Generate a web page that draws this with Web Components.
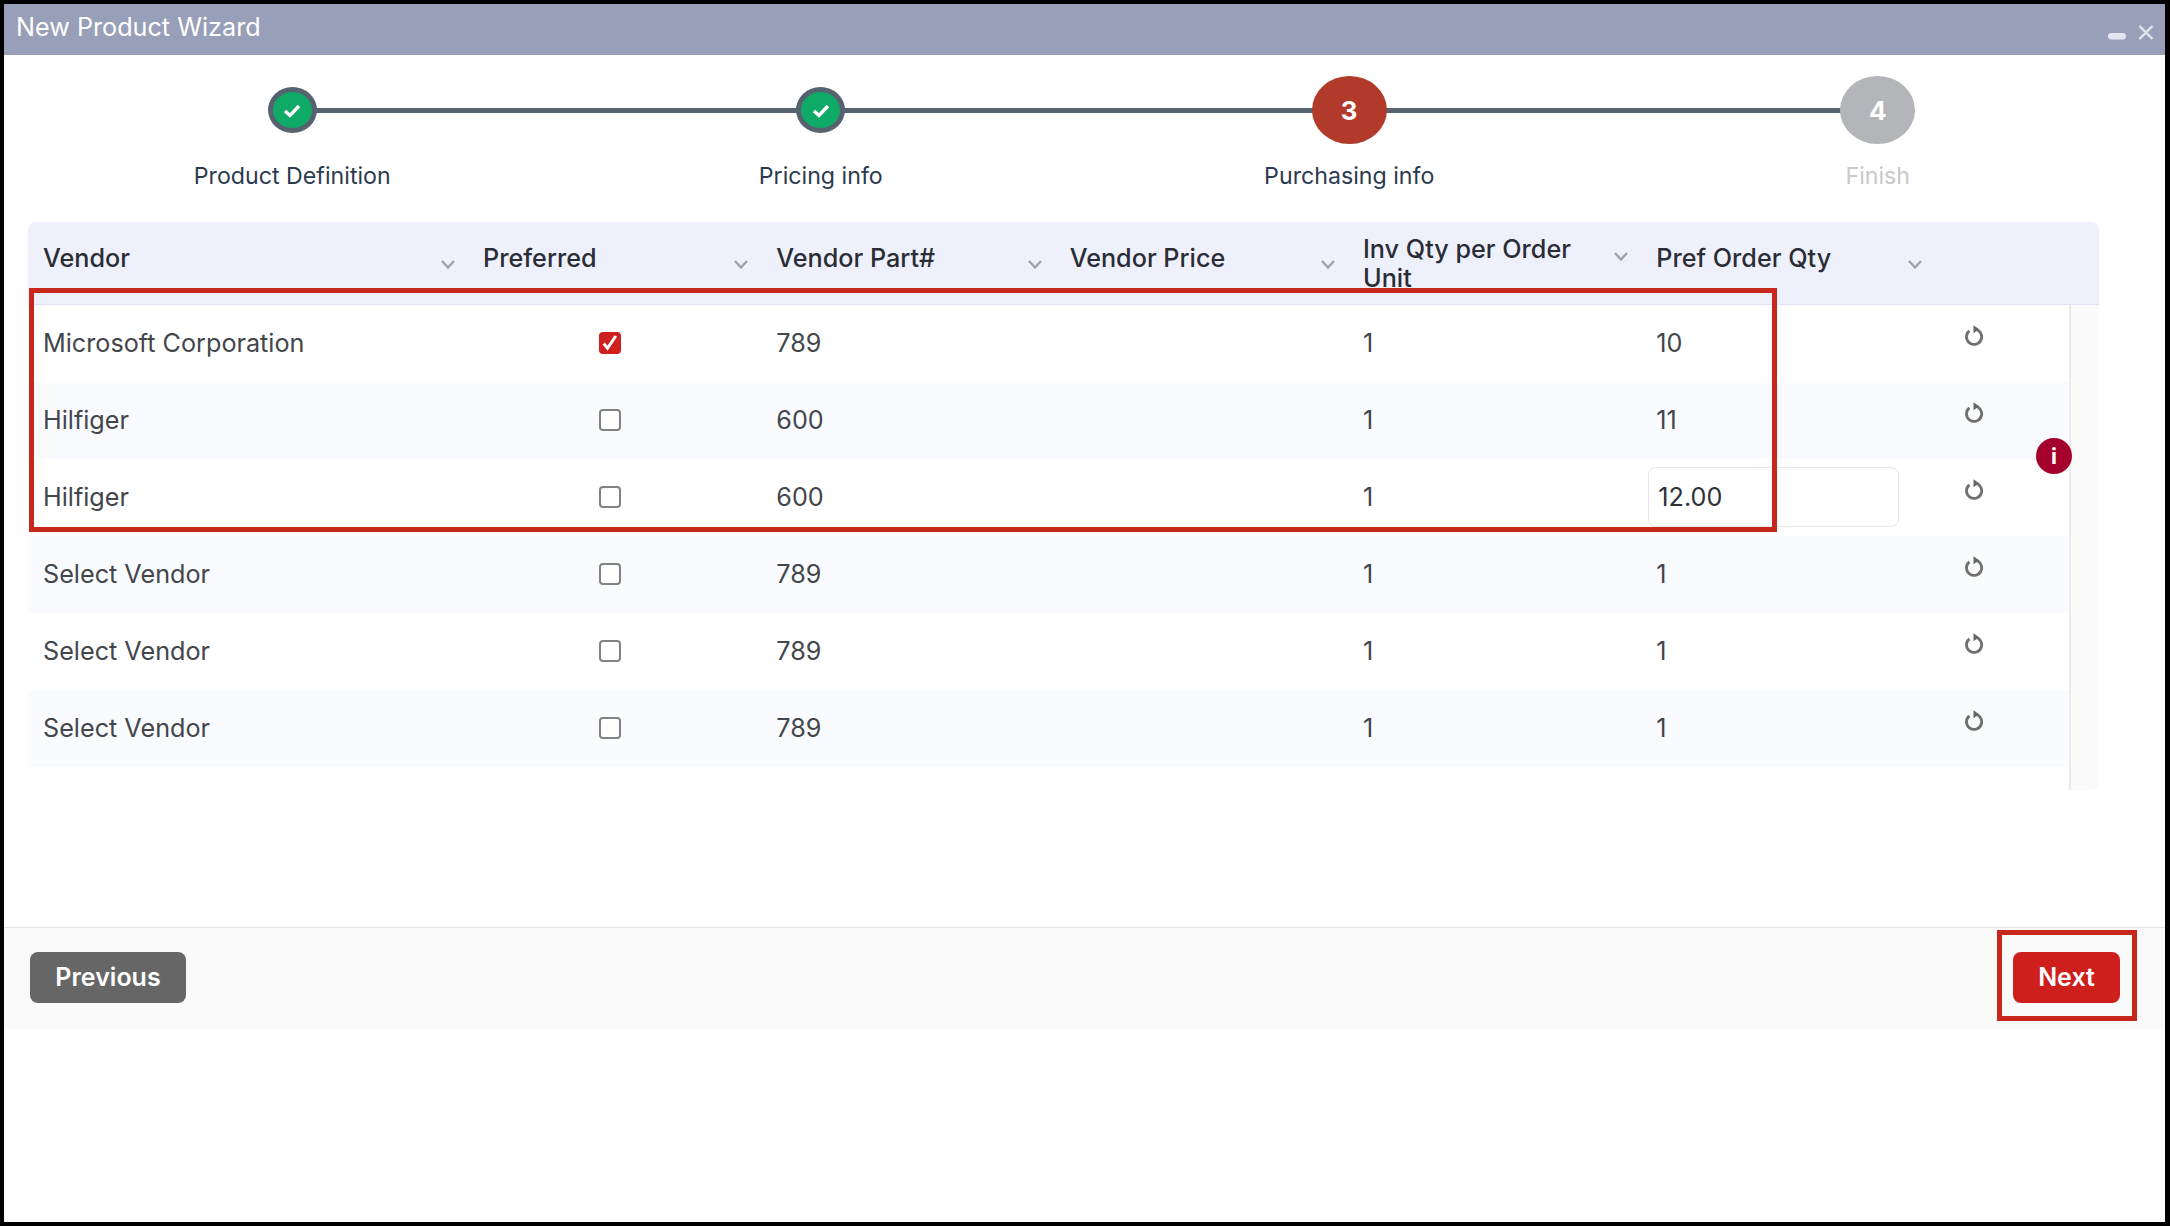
<!DOCTYPE html>
<html>
<head>
<meta charset="utf-8">
<title>New Product Wizard</title>
<style>
    html, body { margin: 0; padding: 0; background: #000; }
    body { padding: 4px 5px 4px 4px; font-family: Inter, "Liberation Sans", sans-serif; }
</style>
</head>
<body>
<wizard-window heading="New Product Wizard">
    <wizard-steps>
        <wizard-step state="done" label="Product Definition"></wizard-step>
        <wizard-step state="done" label="Pricing info"></wizard-step>
        <wizard-step state="active" number="3" label="Purchasing info"></wizard-step>
        <wizard-step state="todo" number="4" label="Finish"></wizard-step>
    </wizard-steps>
    <vendor-table>
        <vendor-row vendor="Microsoft Corporation" part="789" qty="1" pref="10" checked></vendor-row>
        <vendor-row tint vendor="Hilfiger" part="600" qty="1" pref="11"></vendor-row>
        <vendor-row vendor="Hilfiger" part="600" qty="1" pref="12.00" editing></vendor-row>
        <vendor-row tint vendor="Select Vendor" part="789" qty="1" pref="1"></vendor-row>
        <vendor-row vendor="Select Vendor" part="789" qty="1" pref="1"></vendor-row>
        <vendor-row tint vendor="Select Vendor" part="789" qty="1" pref="1"></vendor-row>
    </vendor-table>
    <wizard-footer>
        <wizard-button kind="back">Previous</wizard-button>
        <wizard-button kind="next">Next</wizard-button>
    </wizard-footer>
    <info-badge style="left:2032px;top:434px"></info-badge>
    <mark-box style="left:24.5px;top:284px;width:1748.5px;height:243.5px"></mark-box>
    <mark-box style="left:1993px;top:926px;width:140px;height:91px"></mark-box>
</wizard-window>

<script>
try {
    (function() {
        const define = (name, html, Base) => {
            const tpl = document.createElement('template');
            tpl.innerHTML = html;
            window.customElements.define(name, class extends (Base || HTMLElement) {
                constructor() {
                    super();
                    this.attachShadow({mode: 'open'});
                    this.shadowRoot.appendChild(tpl.content.cloneNode(true));
                }
                connectedCallback() {
                    if (this.render) this.render();
                }
            });
        };

        define('wizard-window', `
            <style>
                :host { display: block; position: relative; width: 2161px; height: 1218px; background: #fff; overflow: hidden; }
                header {
                    display: flex; align-items: center; justify-content: space-between;
                    height: 51px; padding: 0 11px 5px 12px; box-sizing: border-box;
                    background: #989fb8; color: #fff; font-size: 25.2px;
                }
                .ctl { display: flex; align-items: flex-end; gap: 12px; margin-top: 10px; }
                svg { display: block; }
            </style>
            <header>
                <span id="title"></span>
                <span class="ctl">
                    <svg width="18" height="7" viewBox="0 0 18 7"><rect width="18" height="6.5" rx="3.2" fill="#e3e6ef"/></svg>
                    <svg width="16" height="15" viewBox="0 0 16 15"><path d="M1.5 1l13 13M14.5 1l-13 13" stroke="#e3e6ef" stroke-width="2.4" fill="none"/></svg>
                </span>
            </header>
            <slot></slot>
        `, class extends HTMLElement {
            render() {
                this.shadowRoot.querySelector('#title').textContent = this.getAttribute('heading');
            }
        });

        define('wizard-steps', `
            <style>
                :host { display: grid; grid-template-columns: repeat(4, 528.5px); padding: 21px 0 31px 24px; }
            </style>
            <slot></slot>
        `);

        define('wizard-step', `
            <style>
                :host { display: block; position: relative; text-align: center; }
                .top { position: relative; height: 68px; display: flex; align-items: center; justify-content: center; }
                .line { position: absolute; left: 50%; width: 100%; top: 32px; height: 5px; background: #566270; }
                :host(:last-child) .line { display: none; }
                .dot {
                    position: relative; box-sizing: border-box; display: flex; align-items: center; justify-content: center;
                    width: 75px; height: 68px; border-radius: 50%;
                    color: #fff; font-size: 26px; font-weight: 700;
                }
                :host([state=done]) .dot { width: 49px; height: 46px; background: #0fa968; border: 5px solid #566270; }
                :host([state=active]) .dot { background: #b23a2a; }
                :host([state=todo]) .dot { background: #b3b5b9; }
                .label { margin-top: 17px; font-size: 23.2px; line-height: 30px; color: #2c3a4f; }
                :host([state=todo]) .label { color: #c9c9c9; }
                svg { display: block; }
            </style>
            <div class="top"><div class="line"></div><div class="dot"></div></div>
            <div class="label"></div>
        `, class extends HTMLElement {
            render() {
                const dot = this.shadowRoot.querySelector('.dot');
                if (this.getAttribute('state') === 'done') {
                    dot.innerHTML = '<svg width="18" height="15" viewBox="0 0 18 15"><path d="M2 8l5 4.5L16 3" fill="none" stroke="#fff" stroke-width="3.4"/></svg>';
                } else {
                    dot.textContent = this.getAttribute('number');
                }
                this.shadowRoot.querySelector('.label').textContent = this.getAttribute('label');
            }
        });

        define('head-cell', `
            <style>
                :host {
                    display: flex; justify-content: space-between; align-items: flex-start;
                    padding: 21.5px 13px 0 15px; box-sizing: border-box; min-width: 0;
                    font-size: 25.2px; line-height: 29px; font-weight: 500; color: #2b2d36;
                }
                :host([two-line]) { padding-top: 13px; }
                svg { flex: none; margin-top: 16.5px; margin-left: 6px; }
                .t { width: 246px; }
            </style>
            <div class="t"><slot></slot></div>
            <svg width="14" height="9" viewBox="0 0 14 9"><path d="M1 1l6 6.5L13 1" fill="none" stroke="#a0a2a6" stroke-width="2.4"/></svg>
        `);

        define('vendor-table', `
            <style>
                :host {
                    display: block; width: 2071px; margin-left: 24px;
                    --cols: 440px repeat(5, 293.33px) 1fr;
                }
                .head {
                    display: grid; grid-template-columns: 440px repeat(5, 293.33px) 1fr 29px;
                    height: 83px; box-sizing: border-box; background: #eef1fc;
                    border-bottom: 1px solid #dfe3f1; border-radius: 8px 8px 0 0;
                }
                .body { display: flex; height: 485px; }
                .rows { flex: 1; min-width: 0; }
                .gutter { width: 30px; box-sizing: border-box; background: #fafafa; border-left: 2px solid #ececec; border-radius: 0 0 6px 0; }
            </style>
            <div class="head">
                <head-cell>Vendor</head-cell>
                <head-cell>Preferred</head-cell>
                <head-cell>Vendor Part#</head-cell>
                <head-cell>Vendor Price</head-cell>
                <head-cell two-line>Inv Qty per Order Unit</head-cell>
                <head-cell>Pref Order Qty</head-cell>
            </div>
            <div class="body">
                <div class="rows"><slot></slot></div>
                <div class="gutter"></div>
            </div>
        `);

        define('check-box', `
            <style>
                :host {
                    display: block; width: 22px; height: 22px; box-sizing: border-box;
                    border: 2px solid #808285; border-radius: 4px; background: #fff;
                }
                :host([checked]) { background: #d01f1f; border-color: #d01f1f; }
                svg { display: none; margin: 0; }
                :host([checked]) svg { display: block; }
            </style>
            <svg width="18" height="18" viewBox="0 0 18 18"><path d="M2.8 9.5l3.7 4.8L14.8 2" fill="none" stroke="#fff" stroke-width="3"/></svg>
        `);

        define('reset-icon', `
            <style>
                :host { display: block; width: 20px; height: 22px; }
                svg { display: block; }
            </style>
            <svg width="20" height="22" viewBox="0 0 20 22">
                <path d="M10 5.2A7.6 7.6 0 1 1 5.4 6.8" fill="none" stroke="#707070" stroke-width="2.8"/>
                <path d="M9.5 1.2L15 5.2 9.5 9.2z" fill="#666"/>
            </svg>
        `);

        define('vendor-row', `
            <style>
                :host {
                    display: grid; grid-template-columns: var(--cols); height: 77px; align-items: center;
                    box-sizing: border-box; padding-bottom: 1px;
                    font-size: 25.2px; color: #43464b;
                }
                :host([tint]) { background: #fafbff; }
                .c { padding-left: 15px; min-width: 0; }
                check-box { margin: 0 0 0 116px; }
                .edit {
                    margin-left: -8px; width: 251px; height: 60px; box-sizing: border-box;
                    display: flex; align-items: center; padding-left: 9px;
                    background: #fff; border: 1px solid #e6e6e6; border-radius: 8px; color: #2f3136;
                }
                reset-icon { margin: -17px 0 0 14px; }
            </style>
            <div class="c" id="vendor"></div>
            <div class="c"><check-box></check-box></div>
            <div class="c" id="part"></div>
            <div class="c"></div>
            <div class="c" id="qty"></div>
            <div class="c" id="pref"></div>
            <div class="c"><reset-icon></reset-icon></div>
        `, class extends HTMLElement {
            render() {
                const root = this.shadowRoot;
                root.querySelector('#vendor').textContent = this.getAttribute('vendor');
                root.querySelector('#part').textContent = this.getAttribute('part');
                root.querySelector('#qty').textContent = this.getAttribute('qty');
                const pref = root.querySelector('#pref');
                if (this.hasAttribute('editing')) {
                    const box = document.createElement('div');
                    box.className = 'edit';
                    box.textContent = this.getAttribute('pref');
                    pref.appendChild(box);
                } else {
                    pref.textContent = this.getAttribute('pref');
                }
                if (this.hasAttribute('checked')) {
                    root.querySelector('check-box').setAttribute('checked', '');
                }
            }
        });

        define('wizard-footer', `
            <style>
                :host {
                    display: flex; justify-content: space-between; align-items: flex-start;
                    margin-top: 137px; height: 102px; box-sizing: border-box;
                    padding: 24px 45px 0 26px;
                    background: #fafafa; border-top: 1px solid #e2e2e2;
                }
            </style>
            <slot></slot>
        `);

        define('wizard-button', `
            <style>
                :host {
                    display: flex; align-items: center; justify-content: center;
                    height: 51px; box-sizing: border-box; padding-bottom: 1px;
                    border-radius: 8px; color: #fff;
                    font-size: 25px; font-weight: 600;
                }
                :host([kind=back]) { width: 156px; background: #666; }
                :host([kind=next]) { width: 107px; background: #cf1f1c; }
            </style>
            <slot></slot>
        `);

        define('info-badge', `
            <style>
                :host {
                    position: absolute; width: 36px; height: 36px; border-radius: 50%;
                    display: flex; align-items: center; justify-content: center;
                    background: #a5012d; color: #fff; font-size: 22px; font-weight: 700;
                }
            </style>
            i
        `);

        define('mark-box', `
            <style>
                :host { position: absolute; box-sizing: border-box; border: 5px solid #c8281b; }
            </style>
        `);
    })();
}
catch (err) {
    console.error(err);
}
</script>
</body>
</html>
